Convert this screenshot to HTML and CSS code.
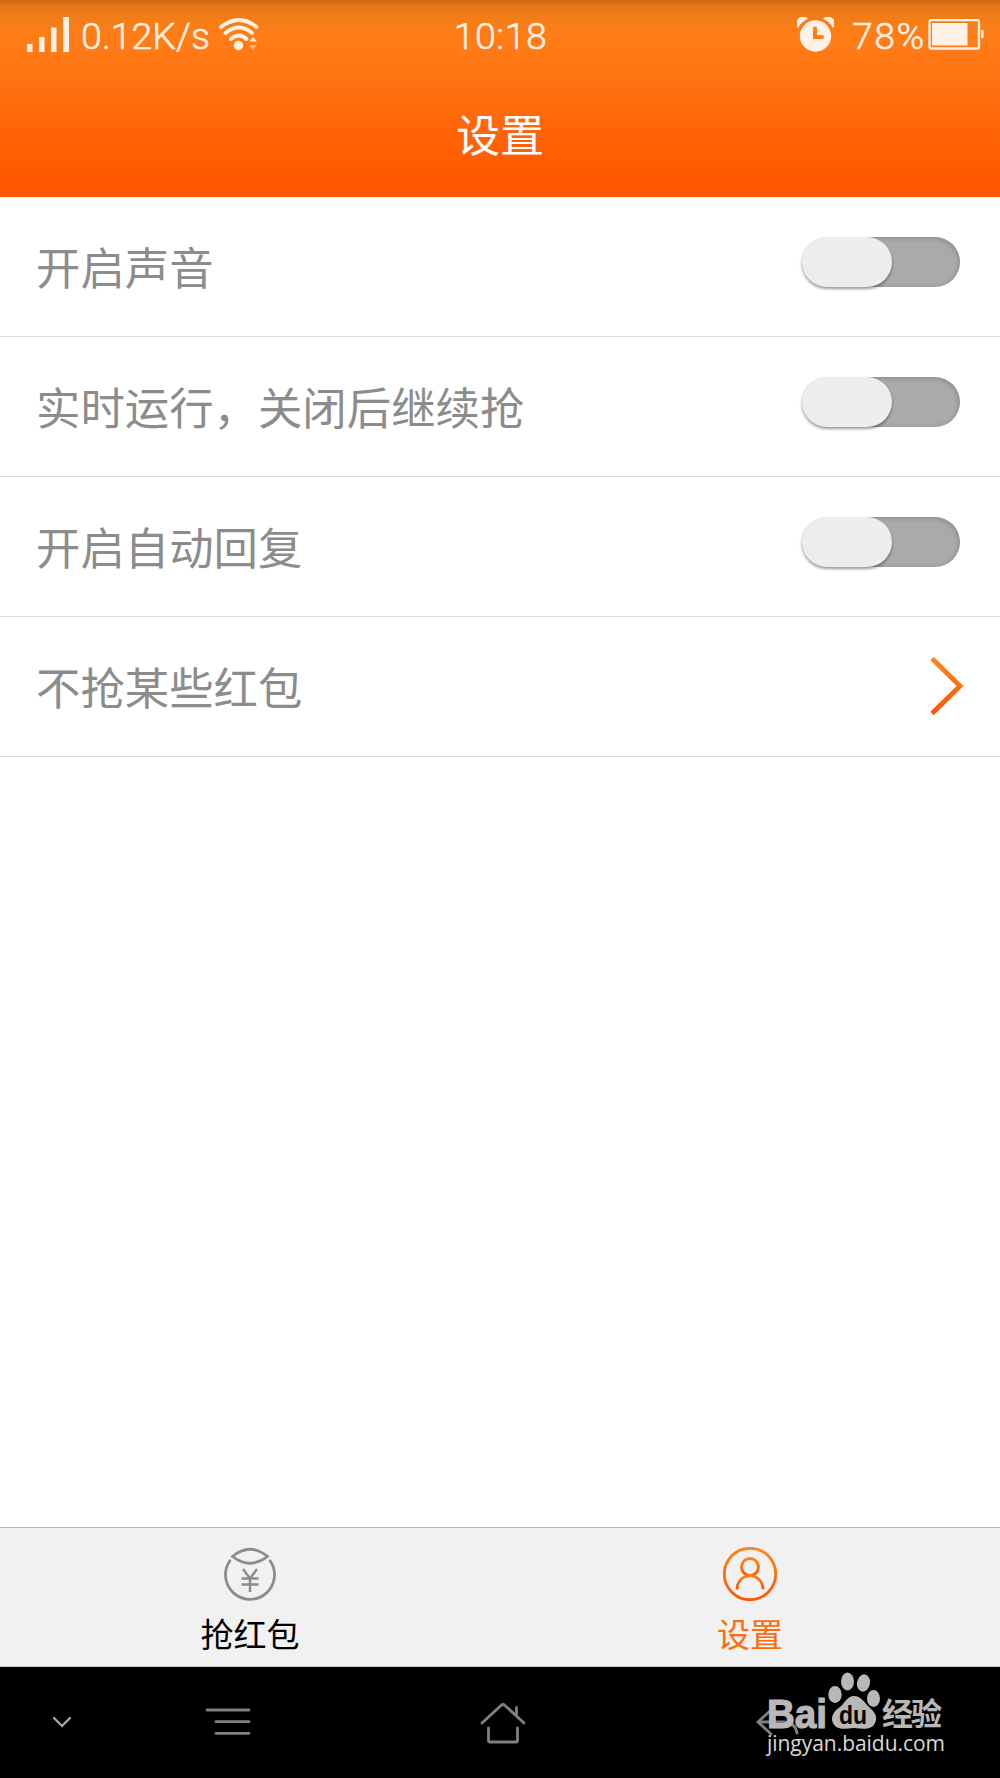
FILE: index.html
```html
<!DOCTYPE html>
<html lang="zh-CN">
<head>
<meta charset="utf-8">
<meta name="viewport" content="width=device-width, initial-scale=1.0">
<title>设置</title>
<link rel="stylesheet" href="styles.css">
</head>
<body>
<div id="header">
	<div class="status">
		<div class="left">
			<svg class="signal" width="42" height="35" viewBox="0 0 42 35">
				<path d="M0 27h5.500v8H0zM12 20h5.500v15H12zM24 10.500h5.500v24.500H24zM36 0h6v35h-6z"/>
			</svg>
			<span class="speed">0.12K/s</span>
			<svg class="wifi" width="40" height="33" viewBox="0 0 40 33">
				<path class="arc" d="M2 9Q20-5 37.500 9M6.500 15Q20 4 33 15M12 21Q20 14 27.500 21"/>
				<circle cx="19.500" cy="27.500" r="4.700"/>
				<path d="M30 23.500l4-4.500 4 4.500z"/>
				<path class="dim" d="M30 27l4 4.500 4-4.500z"/>
			</svg>
		</div>
		<div class="time">10:18</div>
		<div class="right">
			<svg class="alarm" width="37" height="35" viewBox="0 0 37 35">
				<path d="M1 11A6 6 0 0 1 11 1.800Q4 5 1 11zM36 11A6 6 0 0 0 26 1.800Q33 5 36 11z"/>
				<ellipse cx="18.500" cy="19" rx="15.700" ry="15.700"/>
				<path class="hand" d="M18 11.500V20h7"/>
			</svg>
			<span class="percent">78%</span>
			<svg class="battery" width="56" height="31" viewBox="0 0 56 31">
				<rect class="case" x="1.500" y="1" width="49.500" height="28.500" rx="2"/>
				<path d="M4 4h35.500v22.500H4zM53 11h2.500v8h-2.500z"/>
			</svg>
		</div>
	</div>
	<h1>设置</h1>
</div>

<ul class="list">
	<li><span>开启声音</span><div class="switch"><i></i></div></li>
	<li><span>实时运行，关闭后继续抢</span><div class="switch"><i></i></div></li>
	<li><span>开启自动回复</span><div class="switch"><i></i></div></li>
	<li>
		<span>不抢某些红包</span>
		<svg class="arrow" width="34" height="60" viewBox="0 0 34 60">
			<defs>
				<linearGradient id="orange" x1="0" y1="0" x2="0" y2="1">
					<stop offset="0" stop-color="#ff8519"/>
					<stop offset="1" stop-color="#ff5500"/>
				</linearGradient>
			</defs>
			<path d="M2 2.500L30 30 2 57.500" stroke="url(#orange)"/>
		</svg>
	</li>
</ul>

<div class="tabs">
	<div class="tab">
		<svg width="54" height="54" viewBox="0 0 54 54">
			<path class="line" d="M6.900 13.800A24.500 24.500 0 1 0 47.100 13.800M9.500 9.500Q27-5 44.500 9.500Q27 23 9.500 9.500z"/>
			<path class="yen" d="M20 22l7 9.500 7-9.500M18.500 31.500h17M18.500 37.500h17M27 31v14"/>
		</svg>
		<span>抢红包</span>
	</div>
	<div class="tab on">
		<svg width="54" height="54" viewBox="0 0 54 54">
			<g class="line" stroke="url(#orange)">
				<circle cx="27" cy="27" r="25.700"/>
				<circle cx="27" cy="20" r="8.500"/>
				<path d="M14 41C16 24.500 38 24.500 40 41"/>
			</g>
		</svg>
		<span>设置</span>
	</div>
</div>

<div class="nav">
	<svg class="down" width="20" height="12" viewBox="0 0 20 12"><path d="M2 2l8 8 8-8"/></svg>
	<svg class="menu" width="48" height="30" viewBox="0 0 48 30"><path d="M3 3h42M12 14.700h33M12 26.300h33"/></svg>
	<svg class="home" width="48" height="44" viewBox="0 0 48 44"><path d="M3 22L22 4.500Q24 2.500 26 4.500L45 22M37.500 6.500V14M9.500 27v12.500q0 1.500 1.500 1.500h26q1.500 0 1.500-1.500V27"/></svg>
	<svg class="back" width="46" height="30" viewBox="0 0 46 30"><path d="M16 3L3 15l13 12M3 15h25c9 0 13 5 14 11"/></svg>
	<svg class="watermark" width="190" height="98" viewBox="0 0 190 98">
		<text class="bai" x="7" y="56.500" textLength="60" lengthAdjust="spacingAndGlyphs">Bai</text>
		<ellipse cx="75" cy="23.500" rx="6.700" ry="8.500"/>
		<ellipse cx="87.500" cy="10.500" rx="6.500" ry="9"/>
		<ellipse cx="103.500" cy="12" rx="6.500" ry="8.700" transform="rotate(12 103.500 12)"/>
		<ellipse cx="113.500" cy="27.500" rx="6.500" ry="8.500"/>
		<path d="M94 25C101 25 104 31 109 36C115 41 118 46 115 52C112 59 104 58 94 57C84 58 76 59 73 52C70 46 74 40 80 36C85 32 87 25 94 25z"/>
		<text class="du" x="79" y="53" textLength="28" lengthAdjust="spacingAndGlyphs">du</text>
		<text class="jy" x="122" y="53.500" textLength="60">经验</text>
		<text class="url" x="7" y="80" textLength="178">jingyan.baidu.com</text>
	</svg>
</div>
</body>
</html>
```
FILE: styles.css
```css
* {
	box-sizing: border-box;
}

body,ul,h1 {
	padding: 0;
	margin: 0;
}

body {
	display: flex;
	flex-direction: column;
	height: 1778px;
	background: #fff;
	font-family: "Noto Sans CJK SC", "Liberation Sans", sans-serif;
	font-weight: 400;
	overflow: hidden;
}

svg {
	display: block;
	flex: none;
}

#header {
	height: 197px;
	color: #fff;
	background: linear-gradient(#cf6d10 0, #cf6d10 3px, #df7414 4px, #f07d17 16px, #ff7e18 34px, #ff7815 60px, #ff5900 175px, #ff5500 197px);
}

.status {
	display: grid;
	grid-template-columns: 1fr auto 1fr;
	height: 68px;
	padding: 0 16px 0 27px;
	font-family: Roboto, sans-serif;
	font-weight: 300;
	font-size: 37.5px;
	line-height: 73px;
	color: #fff1e6;
	fill: #fff1e6;
	-webkit-text-stroke: .5px #fff1e6;
}

.left,.right {
	display: flex;
	align-items: center;
	height: 69px;
}

.signal,.wifi,.alarm,.battery {
	margin-top: -1px;
}

.speed {
	width: 137px;
	margin-left: 12px;
	height: 68px;
	line-height: 70px;
	letter-spacing: 0;
}

.wifi {
	margin-left: 1px;
}

.right {
	justify-content: flex-end;
}

.wifi .arc {
	fill: none;
	stroke: #fff1e6;
	stroke-width: 3.8;
	stroke-linecap: round;
}

.wifi .dim {
	opacity: .5;
}

.time {
	margin-left: -10px;
	letter-spacing: .5px;
}

.alarm {
	margin-right: 18px;
}

.alarm .hand {
	fill: none;
	stroke: #ff7e18;
	stroke-width: 4;
	stroke-linecap: round;
}

.percent {
	width: 76px;
	height: 68px;
	line-height: 70px;
	letter-spacing: 1.5px;
}

.battery .case {
	fill: none;
	stroke: #fff1e6;
	stroke-width: 2.4;
}

h1 {
	font-size: 44px;
	font-weight: 400;
	line-height: 64px;
	padding-top: 33px;
	text-align: center;
}

.list {
	flex: 1;
	list-style: none;
}

.list li {
	display: flex;
	justify-content: space-between;
	height: 140px;
	padding: 0 40px 0 36px;
	border-bottom: 1px solid #dcdcdc;
	font-size: 44.4px;
	line-height: 138px;
	color: #8c8c8c;
}

.switch {
	width: 158px;
	height: 50px;
	margin-top: 40px;
	border-radius: 25px;
	background: linear-gradient(90deg, transparent 40px, #aaa 40px);
	box-shadow: inset -1px 1px 5px rgba(0,0,0,.2);
}

.switch i {
	display: block;
	width: 90px;
	height: 50px;
	border-radius: 25px;
	background: #ededed;
	box-shadow: 0 2px 3px rgba(0,0,0,.4);
}

.arrow {
	margin: 39px -4px 0 0;
	fill: none;
	stroke-width: 4.8;
}

.tabs {
	display: flex;
	height: 140px;
	border-top: 1px solid #b5b5b5;
	border-bottom: 1px solid #ccc;
	background: #f1f1f1;
}

.tab {
	display: flex;
	flex: 1;
	flex-direction: column;
	align-items: center;
	padding-top: 19px;
	font-size: 33px;
	line-height: 48px;
	color: #000;
}

.tab span {
	margin-top: 8px;
}

.tab .line {
	fill: none;
	stroke-width: 2.8;
	stroke-linecap: round;
}

.tab path.line,.tab .yen {
	stroke: #8c8c8c;
}

.tab .yen {
	fill: none;
	stroke-width: 2.5;
}

.on {
	color: #ff6c0c;
}

.nav {
	position: relative;
	display: flex;
	height: 111px;
	padding-left: 52px;
	background: #000;
	fill: none;
	stroke: #808080;
	stroke-width: 2.8;
	stroke-linecap: round;
}

.down {
	margin-top: 49px;
	stroke: #aaa;
	stroke-width: 2.2;
}

.menu {
	margin: 40px 0 0 132px;
}

.home {
	margin: 34px 0 0 227px;
}

.back {
	margin: 40px 0 0 228px;
}

/* logo over the back key */
.watermark {
	position: absolute;
	left: 760px;
	top: 4px;
	fill: #b8b8b8;
	stroke: none;
}

.bai {
	font: bold 40px "Liberation Sans", sans-serif;
	stroke: #b8b8b8;
	stroke-width: 1.2;
}

.du {
	font: bold 26px "Liberation Sans", sans-serif;
	fill: #000;
}

.jy {
	font: bold 31px "Noto Sans CJK SC", sans-serif;
}

.url {
	font: 21px "Open Sans", sans-serif;
	fill: #d8d8d8;
}
```
